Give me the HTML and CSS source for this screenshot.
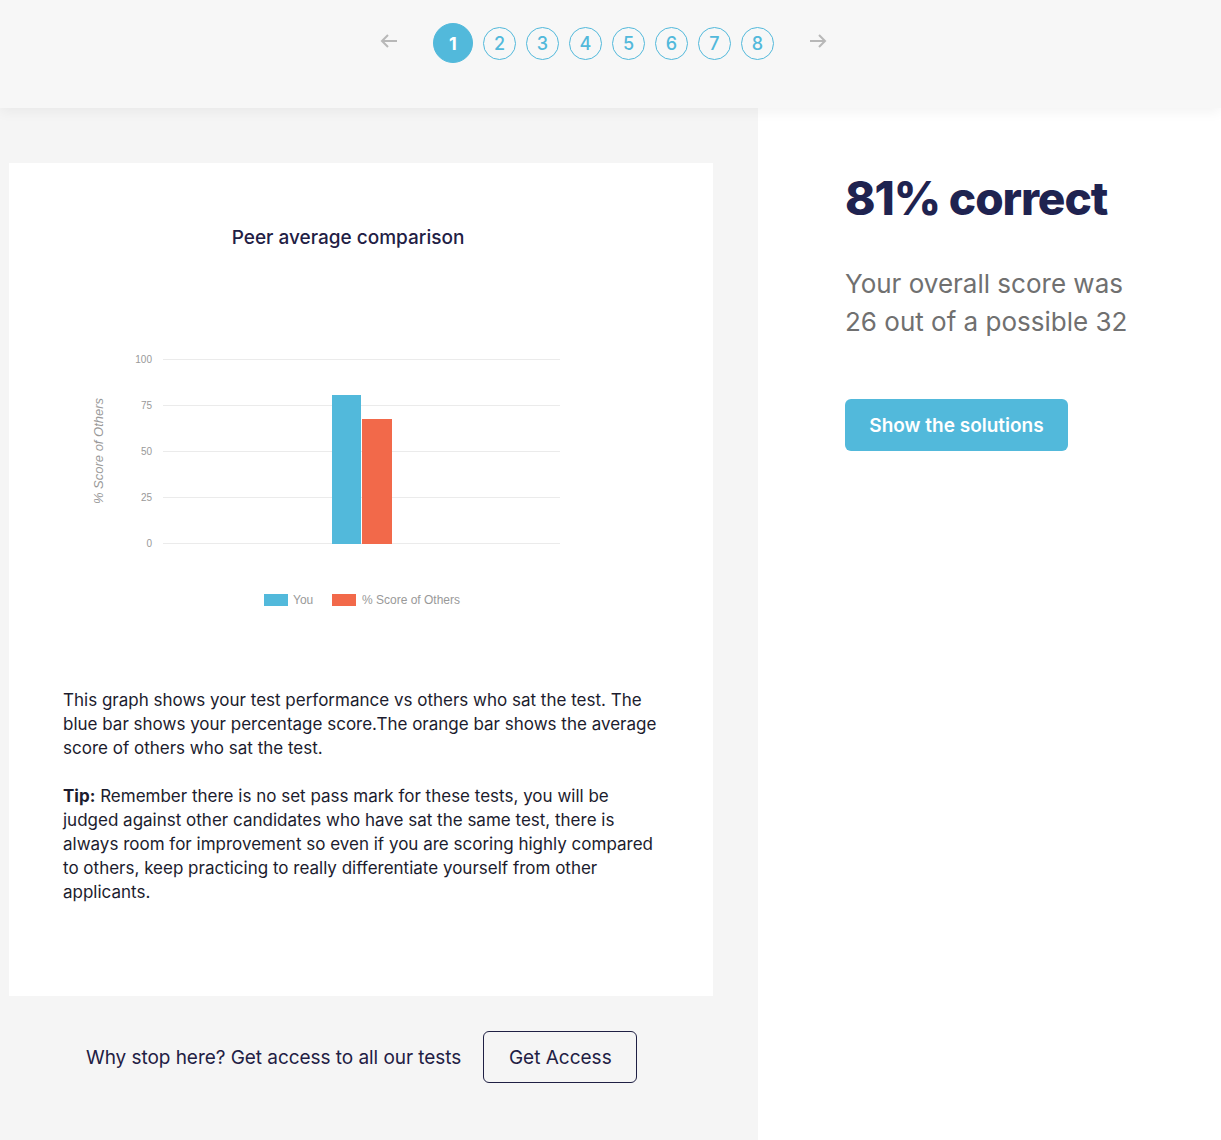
FILE: index.html
```html
<!DOCTYPE html>
<html lang="en">
<head>
<meta charset="utf-8">
<title>Results</title>
<link rel="stylesheet" href="styles.css">
</head>
<body>
<header class="topbar">
  <nav class="pager">
    <span class="arrow arrow-prev">
      <svg width="18" height="14" viewBox="0 0 18 14"><path d="M17 7H2M8 1L2 7l6 6" fill="none" stroke="#b8b8b8" stroke-width="2"/></svg>
    </span>
    <ol class="pages">
      <li class="page active">1</li>
      <li class="page">2</li>
      <li class="page">3</li>
      <li class="page">4</li>
      <li class="page">5</li>
      <li class="page">6</li>
      <li class="page">7</li>
      <li class="page">8</li>
    </ol>
    <span class="arrow arrow-next">
      <svg width="18" height="14" viewBox="0 0 18 14"><path d="M1 7h15M10 1l6 6-6 6" fill="none" stroke="#b8b8b8" stroke-width="2"/></svg>
    </span>
  </nav>
</header>
<main class="layout">
  <section class="left">
    <div class="card">
      <h2 class="chart-title">Peer average comparison</h2>
      <div class="chart">
        <svg width="500" height="280" viewBox="0 0 500 280">
          <g stroke="#ebebeb" stroke-width="1">
            <line x1="83" y1="19.5" x2="480" y2="19.5"/>
            <line x1="83" y1="65.5" x2="480" y2="65.5"/>
            <line x1="83" y1="111.5" x2="480" y2="111.5"/>
            <line x1="83" y1="157.5" x2="480" y2="157.5"/>
            <line x1="83" y1="203.5" x2="480" y2="203.5"/>
          </g>
          <g font-family="Liberation Sans, Arial, sans-serif" font-size="10" fill="#999" text-anchor="end">
            <text x="72" y="23">100</text>
            <text x="72" y="69">75</text>
            <text x="72" y="115">50</text>
            <text x="72" y="161">25</text>
            <text x="72" y="207">0</text>
          </g>
          <text x="0" y="0" transform="translate(23,111) rotate(-90)" font-family="Liberation Sans, Arial, sans-serif" font-style="italic" font-size="13" fill="#999" text-anchor="middle">% Score of Others</text>
          <rect x="252" y="55" width="29" height="149" fill="#52b9db"/>
          <rect x="282" y="79" width="30" height="125" fill="#f2694a"/>
          <rect x="184" y="254" width="24" height="12" fill="#52b9db"/>
          <text x="213" y="264" font-family="Liberation Sans, Arial, sans-serif" font-size="12" fill="#999">You</text>
          <rect x="252" y="254" width="24" height="12" fill="#f2694a"/>
          <text x="282" y="264" font-family="Liberation Sans, Arial, sans-serif" font-size="12" fill="#999">% Score of Others</text>
        </svg>
      </div>
      <div class="copy">
        <p>This graph shows your test performance vs others who sat the test. The blue bar shows your percentage score.The orange bar shows the average score of others who sat the test.</p>
        <p><strong>Tip:</strong> Remember there is no set pass mark for these tests, you will be judged against other candidates who have sat the same test, there is always room for improvement so even if you are scoring highly compared to others, keep practicing to really differentiate yourself from other applicants.</p>
      </div>
    </div>
    <div class="cta">
      <span class="cta-text">Why stop here? Get access to all our tests</span>
      <a class="btn-outline" href="#">Get Access</a>
    </div>
  </section>
  <aside class="right">
    <h1 class="score">81% correct</h1>
    <p class="score-sub">Your overall score was 26 out of a possible 32</p>
    <a class="btn-primary" href="#">Show the solutions</a>
  </aside>
</main>
</body>
</html>
```

FILE: styles.css
```css
* { box-sizing: border-box; }
html, body { margin: 0; padding: 0; }
body {
  font-family: "Inter", "Lato", sans-serif;
  background: #ffffff;
  color: #1f2044;
  width: 1221px;
  height: 1140px;
  overflow: hidden;
}
.topbar {
  height: 108px;
  background: #f7f7f7;
  display: flex;
  justify-content: center;
  position: relative;
  z-index: 2;
  box-shadow: 0 4px 12px rgba(0,0,0,0.05);
}
.pager {
  display: flex;
  align-items: center;
  height: 86px;
  padding-right: 14px;
}
.arrow { display: flex; align-items: center; margin-top: -4px; }
.arrow-prev { margin-right: 35px; }
.arrow-next { margin-left: 35px; }
.pages {
  list-style: none;
  margin: 0;
  padding: 0;
  display: flex;
  align-items: center;
  gap: 10px;
}
.page {
  width: 33px;
  height: 33px;
  border: 1px solid #52b9db;
  border-radius: 50%;
  color: #52b9db;
  font-size: 18px;
  font-weight: 500;
  display: flex;
  align-items: center;
  justify-content: center;
}
.page.active {
  width: 40px;
  height: 40px;
  background: #52b9db;
  color: #ffffff;
  font-weight: 700;
}
.layout {
  display: flex;
  height: 1032px;
}
.left {
  width: 758px;
  background: #f5f5f5;
  padding: 55px 0 0 9px;
}
.card {
  width: 704px;
  height: 833px;
  background: #ffffff;
  padding-top: 63px;
}
.chart-title {
  margin: 0;
  font-size: 19px;
  font-weight: 500;
  text-align: center;
  padding-right: 26px;
  color: #1f2044;
  line-height: 24px;
}
.chart {
  margin: 90px 0 0 71px;
  height: 280px;
}
.chart svg { display: block; }
.copy {
  margin-top: 68px;
  padding: 0 50px 0 54px;
  font-size: 17px;
  line-height: 24px;
  color: #1c1c2e;
}
.copy p { margin: 0 0 24px; }
.copy strong { font-weight: 700; }
.cta {
  display: flex;
  align-items: center;
  padding: 35px 0 0 77px;
  gap: 22px;
}
.cta-text {
  font-size: 19px;
  color: #1f2044;
  letter-spacing: -0.05px;
}
.btn-outline {
  display: inline-flex;
  align-items: center;
  justify-content: center;
  width: 154px;
  height: 52px;
  border: 1px solid #1f2044;
  border-radius: 6px;
  color: #1f2044;
  font-size: 19px;
  text-decoration: none;
}
.right {
  flex: 1;
  background: #ffffff;
  padding: 62px 0 0 87px;
}
.score {
  margin: 0;
  font-size: 46px;
  font-weight: 800;
  color: #1f2350;
  line-height: 56px;
  letter-spacing: -1.1px;
}
.score-sub {
  margin: 39px 0 0;
  font-size: 26px;
  line-height: 38px;
  color: #707070;
  width: 300px;
}
.btn-primary {
  display: inline-flex;
  align-items: center;
  justify-content: center;
  margin-top: 58px;
  width: 223px;
  height: 52px;
  background: #52b9db;
  border-radius: 6px;
  color: #ffffff;
  font-size: 19px;
  font-weight: 600;
  text-decoration: none;
}
```
